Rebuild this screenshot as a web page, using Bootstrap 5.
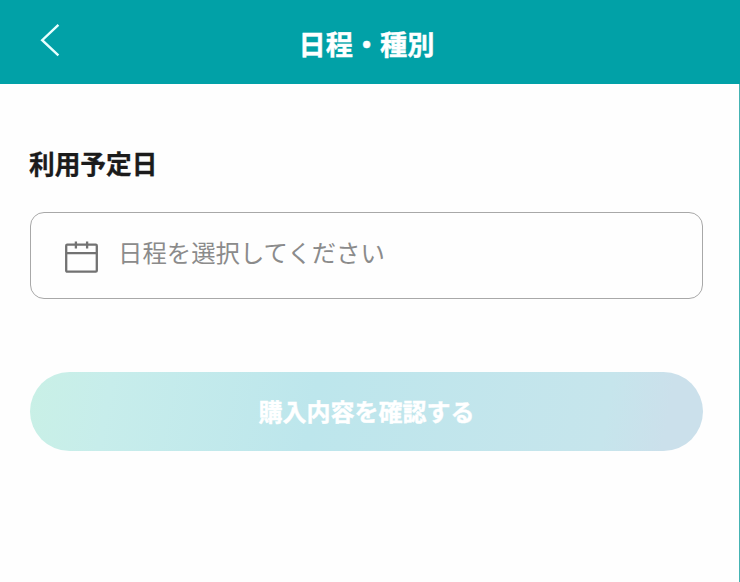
<!DOCTYPE html>
<html lang="ja">
<head>
<meta charset="utf-8">
<meta name="viewport" content="width=device-width, initial-scale=1">
<title>日程・種別</title>
<link href="https://cdn.jsdelivr.net/npm/bootstrap@5.3.0/dist/css/bootstrap.min.css" rel="stylesheet">
<style>
  body { font-family: "Noto Sans CJK JP", sans-serif; background: #fefefe; }
  .screen { height: 582px; }
  .app-header { height: 84px; background: #01a1a7; }
  .app-title { font-size: 27.2px; line-height: 40px; margin: 2px 7px 0 0; -webkit-text-stroke: .4px currentColor; }
  .back-link { left: 40px; top: 23px; width: 20px; height: 34px; line-height: 0; }
  .content { padding: 59px 36px 0 30px; border-right: 1px solid #45b3b3; }
  .field-label { font-size: 25.7px; line-height: 40px; color: #1b1b1b; margin: 0 0 29px -1px; -webkit-text-stroke: .3px currentColor; }
  .date-field { height: 87px; border: 1px solid #a8a8a8; border-radius: 14px; padding: 0 34px; }
  .date-field svg { margin-top: 2px; }
  .date-hint { font-size: 24.4px; line-height: 36px; color: #8b8b8b; margin: -7px 0 0 19px; }
  .confirm-btn, .confirm-btn:disabled {
    height: 79px; margin-top: 73px; padding: 0 0 2px; font-size: 24px; color: #fff; opacity: 1; border: 0;
    -webkit-text-stroke: .4px currentColor;
    background: linear-gradient(100deg, #c9f0e6 0%, #c7edeb 12%, #bde6ec 42%, #c6e5ec 85%, #cbe0eb 94%);
  }
</style>
</head>
<body>
<div class="screen d-flex flex-column">
  <header class="app-header position-relative d-flex align-items-center justify-content-center text-white">
    <a href="#" class="back-link position-absolute text-white" aria-label="戻る">
      <svg width="20" height="34" viewBox="0 0 20 34" fill="none" stroke="#e8ffff" stroke-width="2.4"><path d="M18.4 1.8 2.2 17.2l16.2 15.2"/></svg>
    </a>
    <h1 class="app-title fw-bold">日程・種別</h1>
  </header>
  <main class="content flex-grow-1">
    <h2 class="field-label fw-bold">利用予定日</h2>
    <div class="date-field d-flex align-items-center" role="button">
      <svg width="34" height="34" viewBox="0 0 34 34" fill="none" stroke="#727272" stroke-width="2.3"><rect x="1.2" y="4.7" width="30.6" height="27" rx="1"/><path d="M1.2 13.2h30.6M10.9 1.5v7M22.1 1.5v7"/></svg>
      <span class="date-hint">日程を選択してください</span>
    </div>
    <button type="button" class="confirm-btn btn rounded-pill w-100 fw-bold" disabled>購入内容を確認する</button>
  </main>
</div>
<script src="https://cdn.jsdelivr.net/npm/bootstrap@5.3.0/dist/js/bootstrap.bundle.min.js"></script>
</body>
</html>
